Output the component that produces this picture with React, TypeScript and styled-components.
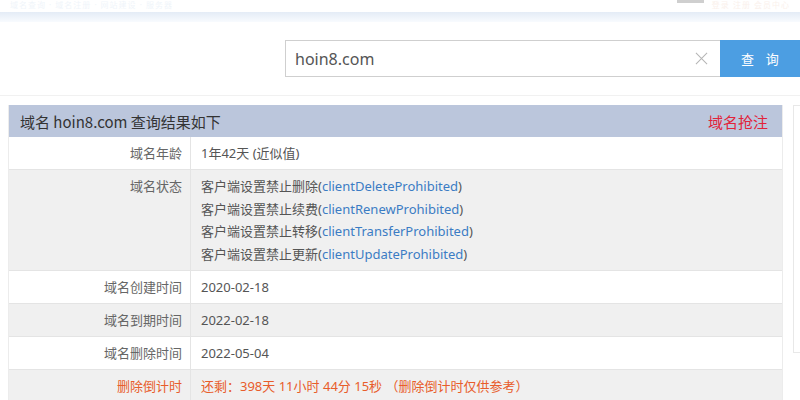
import React from 'react';
import styled, { createGlobalStyle } from 'styled-components';

const GlobalStyle = createGlobalStyle`
  html, body {
    margin: 0;
    padding: 0;
    background: #fff;
    overflow: hidden;
  }
  body {
    font-family: "Noto Sans", "Noto Sans CJK SC", sans-serif;
    color: #555;
  }
`;

type Row = {
  label: string;
  values: React.ReactNode[];
  alt?: boolean;
  warn?: boolean;
};

const statuses = [
  ['客户端设置禁止删除', 'clientDeleteProhibited'],
  ['客户端设置禁止续费', 'clientRenewProhibited'],
  ['客户端设置禁止转移', 'clientTransferProhibited'],
  ['客户端设置禁止更新', 'clientUpdateProhibited'],
];

export default function App() {
  const rows: Row[] = [
    { label: '域名年龄', values: ['1年42天 (近似值)'] },
    {
      label: '域名状态',
      alt: true,
      values: statuses.map(([cn, en]) => (
        <>
          {cn}(<StatusLink>{en}</StatusLink>)
        </>
      )),
    },
    { label: '域名创建时间', values: ['2020-02-18'] },
    { label: '域名到期时间', values: ['2022-02-18'], alt: true },
    { label: '域名删除时间', values: ['2022-05-04'] },
    {
      label: '删除倒计时',
      values: ['还剩：398天 11小时 44分 15秒 （删除倒计时仅供参考）'],
      alt: true,
      warn: true,
    },
  ];

  return (
    <>
      <GlobalStyle />
      <TopBar>
        <FaintText>域名查询 · 域名注册 · 网站建设 · 服务器</FaintText>
        <TopRight>
          <FaintTab />
          <FaintText $warm>登录 注册 会员中心</FaintText>
        </TopRight>
      </TopBar>
      <TopShade />
      <SearchRow>
        <SearchBox>
          <SearchInput defaultValue="hoin8.com" />
          <ClearIcon viewBox="0 0 14 14">
            <path d="M1 1 L13 13 M13 1 L1 13" stroke="#b5b5b5" strokeWidth="1.1" fill="none" />
          </ClearIcon>
        </SearchBox>
        <SearchButton>查&nbsp;&nbsp;&nbsp;&nbsp;询</SearchButton>
      </SearchRow>
      <Divider />
      <Main>
        <ResultTable>
          <TableHead>
            <HeadTitle>域名 hoin8.com 查询结果如下</HeadTitle>
            <HeadLink>域名抢注</HeadLink>
          </TableHead>
          {rows.map((row) => (
            <TableRow key={row.label} $alt={row.alt}>
              <LabelCell $warn={row.warn} $multi={row.values.length > 1}>
                {row.label}
              </LabelCell>
              <ValueCell $warn={row.warn} $multi={row.values.length > 1}>
                {row.values.map((v, i) => (
                  <ValueLine key={i}>{v}</ValueLine>
                ))}
              </ValueCell>
            </TableRow>
          ))}
        </ResultTable>
        <SidePanel />
      </Main>
    </>
  );
}

const TopBar = styled.div`
  height: 12px;
  display: flex;
  justify-content: space-between;
  align-items: flex-start;
  padding: 0 10px;
  overflow: hidden;
`;

const FaintText = styled.span<{ $warm?: boolean }>`
  font-size: 8px;
  line-height: 10px;
  color: ${(p) => (p.$warm ? '#faf1ec' : '#f0f5fa')};
  letter-spacing: 1px;
`;

const TopRight = styled.div`
  display: flex;
  gap: 8px;
  align-items: flex-start;
`;

const FaintTab = styled.div`
  width: 27px;
  height: 3px;
  background: #cfcfcf;
`;

const TopShade = styled.div`
  height: 10px;
  background: linear-gradient(#e4ecf6, #f8fbfe);
`;

const SearchRow = styled.div`
  display: flex;
  margin: 18px 0 0 285px;
  height: 37px;
  width: 560px;
`;

const SearchBox = styled.div`
  width: 435px;
  box-sizing: border-box;
  border: 1px solid #cfcfcf;
  border-right: none;
  display: flex;
  align-items: center;
  padding: 0 12px 0 9px;
`;

const SearchInput = styled.input`
  flex: 1;
  border: none;
  outline: none;
  font-family: "Noto Sans", "Noto Sans CJK SC", sans-serif;
  font-size: 16px;
  color: #555;
  padding: 0;
  background: transparent;
`;

const ClearIcon = styled.svg`
  width: 13px;
  height: 13px;
`;

const SearchButton = styled.button`
  width: 125px;
  border: none;
  background: #4c9ee2;
  color: #fff;
  font-family: "Noto Sans CJK SC", sans-serif;
  font-size: 13px;
  text-align: left;
  padding-left: 21px;
`;

const Divider = styled.div`
  margin-top: 18px;
  height: 1px;
  background: #f1f1f1;
`;

const Main = styled.div`
  display: flex;
  gap: 10px;
  padding: 9px 0 0 8px;
  align-items: flex-start;
  width: 1100px;
`;

const ResultTable = styled.div`
  width: 775px;
  flex-shrink: 0;
  border-left: 1px solid #ececec;
  border-right: 1px solid #ececec;
  box-sizing: border-box;
`;

const TableHead = styled.div`
  height: 32px;
  background: #bbc6dc;
  display: flex;
  align-items: center;
  justify-content: space-between;
  padding: 0 14px 0 11px;
  font-family: "Noto Sans CJK SC", sans-serif;
  font-size: 15px;
`;

const HeadTitle = styled.span`
  color: #333;
`;

const HeadLink = styled.span`
  color: #e2233a;
`;

const TableRow = styled.div<{ $alt?: boolean }>`
  display: flex;
  background: ${(p) => (p.$alt ? '#f0f0f0' : '#fff')};
  border-top: 1px solid #e4e4e4;
  &:nth-child(2) {
    border-top: none;
  }
`;

const LabelCell = styled.div<{ $warn?: boolean; $multi?: boolean }>`
  width: 182px;
  flex-shrink: 0;
  box-sizing: border-box;
  padding: ${(p) => (p.$multi ? '5px 8px 0 0' : '0 8px 0 0')};
  border-right: 1px solid #e4e4e4;
  font-family: "Noto Sans CJK SC", sans-serif;
  font-size: 13px;
  line-height: 22.5px;
  color: ${(p) => (p.$warn ? '#e85d2b' : '#666')};
  display: flex;
  align-items: ${(p) => (p.$multi ? 'flex-start' : 'center')};
  justify-content: flex-end;
  min-height: 32px;
`;

const ValueCell = styled.div<{ $warn?: boolean; $multi?: boolean }>`
  padding: ${(p) => (p.$multi ? '5px 10px' : '0 10px')};
  font-size: 13px;
  color: ${(p) => (p.$warn ? '#e85d2b' : '#555')};
  display: flex;
  flex-direction: column;
  justify-content: center;
  min-height: 32px;
`;

const ValueLine = styled.div`
  line-height: 22.5px;
  white-space: nowrap;
`;

const StatusLink = styled.span`
  color: #3b7cc4;
`;

const SidePanel = styled.div`
  width: 220px;
  flex-shrink: 0;
  height: 248px;
  border: 1px solid #e8e8e8;
  box-sizing: border-box;
`;
